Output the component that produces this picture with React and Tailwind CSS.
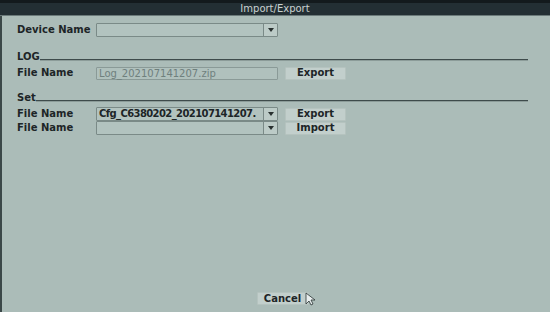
const FONT = { fontFamily: '"DejaVu Sans", Verdana, sans-serif' };

function Combo({ value, width = "w-[182px]" }) {
  return (
    <div className={`${width} h-[14px] flex border border-[#7a8a87] bg-[#b2c3bf] rounded-[1px]`}>
      <div className="flex-1 min-w-0 overflow-hidden whitespace-nowrap text-[10px] leading-[12px] pl-[2px] font-bold text-[#1d2527] tracking-[-0.6px]">
        {value}
      </div>
      <div className="w-[14px] border-l border-[#7a8a87] flex items-center justify-center bg-[#bccbc7]">
        <svg width="6" height="4" viewBox="0 0 6 4"><path d="M0 0h6L3 4z" fill="#28302f" /></svg>
      </div>
    </div>
  );
}

function Btn({ children, className = "w-[61px]" }) {
  return (
    <div className={`${className} h-[13px] bg-[#c2cfcc] border border-[#b5c3bf] rounded-[1px] flex items-center justify-center text-[10px] font-bold text-[#1d2527] leading-none`}>
      {children}
    </div>
  );
}

function Section({ title }) {
  return (
    <div className="flex items-end h-[12px] mr-[22px]">
      <span className="text-[10px] font-bold text-[#1d2527] leading-none">{title}</span>
      <div className="flex-1 h-[2px] mb-[1px] bg-[#3e4b4b] border-b border-[#8c9c99]" />
    </div>
  );
}

function Row({ children }) {
  return (
    <div className="flex items-center h-[14px]">
      <span className="w-[79px] text-[10px] font-bold text-[#1d2527] leading-none">File Name</span>
      {children}
    </div>
  );
}

export default function App() {
  return (
    <div className="w-[550px] h-[312px] bg-[#abbcb8] flex flex-col relative overflow-hidden" style={FONT}>
      {/* title bar */}
      <div className="h-[16px] bg-[#232f34] border-t-[3px] border-[#131a1d] border-b border-b-[#6b7a7a] flex items-center justify-center text-[10px] text-[#c9d1d1] leading-none">
        Import/Export
      </div>

      <div className="flex-1 flex flex-col border-l-2 border-[#3b4848] pl-[15px]">
        <div className="flex items-center h-[14px] mt-[7px]">
          <span className="w-[79px] text-[10px] font-bold text-[#1d2527] leading-none">Device Name</span>
          <Combo value="" />
        </div>

        <div className="mt-[13px]"><Section title="LOG" /></div>
        <div className="mt-[4px]">
          <Row>
            <div className="w-[182px] h-[13px] border border-[#8a9a97] bg-[#b0c1bd] rounded-[1px] text-[10px] leading-[11px] pl-[2px] text-[#6f807d]">
              Log_202107141207.zip
            </div>
            <div className="ml-[7px]"><Btn>Export</Btn></div>
          </Row>
        </div>

        <div className="mt-[11px]"><Section title="Set" /></div>
        <div className="mt-[4px]">
          <Row>
            <Combo value="Cfg_C6380202_202107141207." />
            <div className="ml-[7px]"><Btn>Export</Btn></div>
          </Row>
        </div>
        <div>
          <Row>
            <Combo value="" />
            <div className="ml-[7px]"><Btn>Import</Btn></div>
          </Row>
        </div>

        <div className="mt-auto mb-[7px] flex justify-center pr-[2px]">
          <Btn className="w-[52px]">Cancel</Btn>
        </div>
      </div>

      {/* mouse cursor */}
      <svg className="absolute left-[305px] top-[292px]" width="10" height="14" viewBox="0 0 10 14">
        <path d="M1 1v11l3-3 2 4 2-1-2-4h4z" fill="#e8eeee" stroke="#2a3232" strokeWidth="0.8" />
      </svg>
    </div>
  );
}
